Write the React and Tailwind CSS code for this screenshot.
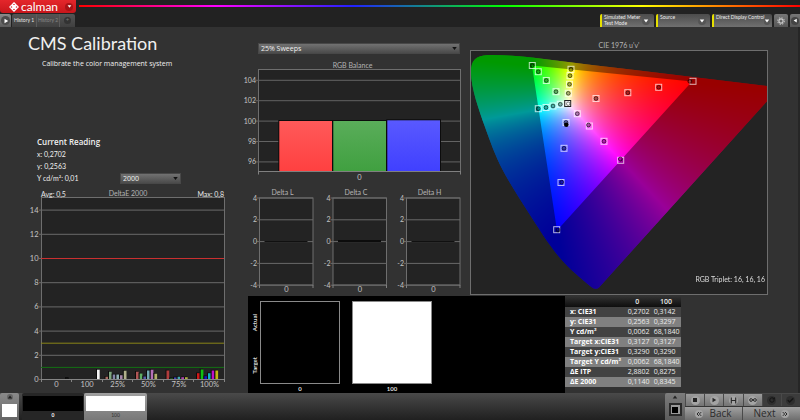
import React, { useLayoutEffect, useRef, useState } from "react";
import {
    Check,
    ChevronsLeft,
    ChevronsRight,
    Infinity as InfinityIcon,
    RotateCw,
} from "lucide-react";

const FONT = "font-['Lato','Open_Sans',sans-serif]";

const deltaEBars = [
    { x: 66, h: 1.5, color: "#111111" },
    { x: 97, h: 9.5, color: "#f4f4f4" },
    { x: 105.5, h: 2.5, color: "#a86a60" },
    { x: 109, h: 7.5, color: "#7fa67f" },
    { x: 112.7, h: 4.7, color: "#8484a8" },
    { x: 116.4, h: 4.7, color: "#8fb0b4" },
    { x: 120, h: 4, color: "#a585aa" },
    { x: 123.8, h: 8.5, color: "#b0b08a" },
    { x: 136, h: 7.5, color: "#b05656" },
    { x: 139.7, h: 5.7, color: "#5fae62" },
    { x: 143.4, h: 2.7, color: "#5858a8" },
    { x: 147, h: 8.7, color: "#74aab2" },
    { x: 150.7, h: 9.5, color: "#b470b8" },
    { x: 154.4, h: 5.5, color: "#b0b068" },
    { x: 166.5, h: 8.7, color: "#b03c3c" },
    { x: 170.2, h: 1, color: "#206020" },
    { x: 174, h: 1.8, color: "#4444b8" },
    { x: 177.6, h: 2.5, color: "#40aab0" },
    { x: 181.3, h: 2, color: "#b040b0" },
    { x: 185, h: 2, color: "#b0b040" },
    { x: 197, h: 6, color: "#d01818" },
    { x: 200.7, h: 9.7, color: "#10c010" },
    { x: 204.4, h: 3, color: "#1414c8" },
    { x: 208, h: 6, color: "#10b4c0" },
    { x: 211.7, h: 8.7, color: "#c010c8" },
    { x: 215.4, h: 8.7, color: "#c0b810" },
];

// target squares and measured circles, in chart units
const ciePoints = [
    { x: 532.3, y: 65.5 },
    { x: 538.3, y: 71.7 },
    { x: 546.3, y: 80.5 },
    { x: 556, y: 91.7 },
    { x: 571, y: 69.3 },
    { x: 570, y: 75.7 },
    { x: 569.5, y: 84.3 },
    { x: 568.3, y: 93.3 },
    { x: 538.3, y: 108.7 },
    { x: 546, y: 107.5 },
    { x: 553, y: 106 },
    { x: 560.3, y: 104.3 },
    { x: 577.3, y: 113.7 },
    { x: 589.3, y: 126, cx: 588.5, cy: 125 },
    { x: 604, y: 141.3 },
    { x: 620.7, y: 160.3, cx: 620.3, cy: 159 },
    { x: 566, y: 122.5 },
    { x: 564, y: 148.3 },
    { x: 561, y: 182.5, cx: 561.7, cy: 182.2 },
    { x: 556.7, y: 229.7, cx: 558, cy: 230 },
    { x: 596, y: 98.5 },
    { x: 627.8, y: 92.7 },
    { x: 658.7, y: 87.3 },
    { x: 693, y: 81.3, cx: 689.8, cy: 81.3 },
];

const tableRows = [
    ["x: CIE31", "0,2702", "0,3142"],
    ["y: CIE31", "0,2563", "0,3297"],
    ["Y cd/m²", "0,0062", "68,1840"],
    ["Target x:CIE31", "0,3127", "0,3127"],
    ["Target y:CIE31", "0,3290", "0,3290"],
    ["Target Y cd/m²", "0,0062", "68,1840"],
    ["ΔE ITP", "2,8802", "0,8275"],
    ["ΔE 2000", "0,1140", "0,8345"],
];

const GAMUT =
    "M471 72C471 60 476 55.5 488 55C503 54.6 517 56 532 57.5L592 65L635 70L767 86V101.3L705 170L635 247.5L599 287.5Q596 290 592 287.5C584 281 573 272 565 263.5C552 250 541 232 532 218C520 199 509 182 502.7 170C495 155 490 141 485 127C479 110 471 88 471 72Z";

function Plot({ x, y, w, h }) {
    return (
        <rect x={x} y={y} width={w} height={h} fill="#232323" stroke="#6e6e6e" strokeWidth="1" />
    );
}

function DeltaEChart() {
    const yOf = (v) => 379.5 - v * 12.1;
    return (
        <svg viewBox="0 188 240 205" className="block w-full" role="img" aria-label="DeltaE 2000">
            <Plot x={41.5} y={197.5} w={183} h={182} />
            <g fill="#e8e8e8" fontSize="7">
                <text x="41" y="196.500">Avg: 0,5</text>
                <text x="224" y="196.500" textAnchor="end">Max: 0,8</text>
            </g>
            <text x="128" y="195.5" fontSize="7" fill="#b4b4b4" textAnchor="middle">DeltaE 2000</text>
            {[0, 2, 4, 6, 8, 10, 12, 14].map((v) => (
                <g key={v}>
                    <path d={`M39 ${yOf(v)}H224`} stroke="#6a6a6a" />
                    <text x="38.5" y={yOf(v) + 2.5} fontSize="7.5" fill="#c4c4c4" textAnchor="end">{v}</text>
                </g>
            ))}
            <path d={`M41 ${yOf(10)}H224`} stroke="#c93030" />
            <path d={`M41 ${yOf(3)}H224`} stroke="#8a8618" />
            <path d={`M41 ${yOf(1)}H224`} stroke="#147014" />
            {deltaEBars.map((b) => (
                <g key={b.x}>
                    <rect x={b.x - 1} y={378.5 - b.h} width="3.4" height={b.h + 0.5} fill="#0c0c0c" />
                    <rect x={b.x} y={379.2 - b.h} width="2.7" height={b.h} fill={b.color} />
                </g>
            ))}
            <path d="M41.5 379.5H224.5M41.5 379v3M71.5 379v3M102.5 379v3M132.5 379v3M163.5 379v3M193.5 379v3M224.5 379v3" stroke="#858585" />
            {["0", "100", "25%", "50%", "75%", "100%"].map((label, i) => (
                <text key={i} x={56.5 + i * 30.6} y="387" fontSize="7.5" fill="#c4c4c4" textAnchor="middle">{label}</text>
            ))}
        </svg>
    );
}

function RgbBalance() {
    const bars = [
        { x: 279.3, y: 121, from: "#ff5959", to: "#ff4040", id: "barRed" },
        { x: 333.3, y: 121, from: "#5aad5a", to: "#40a040", id: "barGreen" },
        { x: 387.3, y: 120.3, from: "#5959ff", to: "#4040ff", id: "barBlue" },
    ];
    return (
        <svg viewBox="240 55 225 132" className="block w-full" role="img" aria-label="RGB Balance">
            <defs>
                {bars.map((b) => (
                    <linearGradient key={b.id} id={b.id} x1="0" y1="0" x2="0" y2="1">
                        <stop offset="0" stopColor={b.from} />
                        <stop offset="1" stopColor={b.to} />
                    </linearGradient>
                ))}
            </defs>
            <text x="352.5" y="67.5" fontSize="7" fill="#b4b4b4" textAnchor="middle">RGB Balance</text>
            <Plot x={258.5} y={69.5} w={202} h={102} />
            {[104, 102, 100, 98, 96].map((v, i) => (
                <g key={v}>
                    <path d={`M255.5 ${80.3 + i * 20.4}H460`} stroke="#636363" />
                    <text x="256" y={82.8 + i * 20.4} fontSize="7" fill="#c4c4c4" textAnchor="end">{v}</text>
                </g>
            ))}
            {bars.map((b) => (
                <g key={b.id}>
                    <rect x={b.x - 1} y={b.y - 1} width="54.7" height={172 - b.y} fill="#0c0c0c" />
                    <rect x={b.x} y={b.y} width="52.7" height={171 - b.y} fill={`url(#${b.id})`} />
                </g>
            ))}
            <path d="M258.5 171.5H460.5M258.5 171v3.5M460.5 171v3.5" stroke="#808080" />
            <text x="359.5" y="179.5" fontSize="7.5" fill="#c4c4c4" textAnchor="middle">0</text>
        </svg>
    );
}

function DeltaCharts() {
    const charts = [
        { title: "Delta L", x: 259.5, line: "#101010", w: 1 },
        { title: "Delta C", x: 333, line: "#0c0c0c", w: 2 },
        { title: "Delta H", x: 406.5, line: "#101010", w: 1 },
    ];
    return (
        <svg viewBox="240 187 225 109" className="block w-full" role="img" aria-label="Delta L, Delta C, Delta H">
            {charts.map((c) => (
                <g key={c.title}>
                    <text x={c.x + 23} y="195" fontSize="7" fill="#b4b4b4" textAnchor="middle">{c.title}</text>
                    <Plot x={c.x} y={198} w={53.5} h={87} />
                    {[4, 2, 0, -2, -4].map((v, i) => (
                        <g key={v}>
                            <path d={`M${c.x - 2.5} ${198 + i * 21.8}H${c.x + 53.5}`} stroke="#6a6a6a" />
                            <text x={c.x - 2.5} y={200.5 + i * 21.8} fontSize="7" fill="#c4c4c4" textAnchor="end">{v}</text>
                        </g>
                    ))}
                    <path d={`M${c.x + 5} ${242 - c.w / 2}h43`} stroke={c.line} strokeWidth={c.w} />
                    <path d={`M${c.x} 285v3M${c.x + 53.5} 285v3`} stroke="#808080" />
                    <text x={c.x + 27} y="292" fontSize="7.5" fill="#c4c4c4" textAnchor="middle">0</text>
                </g>
            ))}
        </svg>
    );
}

// Colour of a chart position: pixel -> u'v' -> XYZ -> linear RGB at full brightness
function chromaticity(px, py) {
    const u = 0.1754 + (px - 557) / 491;
    const v = 0.1579 + (230.5 - py) / 408;
    const X = (9 * u) / (4 * v);
    const Z = (12 - 3 * u - 20 * v) / (4 * v);
    const rgb = [
        3.2406 * X - 1.5372 - 0.4986 * Z,
        -0.9689 * X + 1.8758 + 0.0415 * Z,
        0.0557 * X - 0.204 + 1.057 * Z,
    ].map((c) => Math.max(c, 0));
    const max = Math.max(...rgb) || 1;
    return rgb.map((c) => (255 * c) / max);
}

function CieChart() {
    const canvasRef = useRef(null);

    useLayoutEffect(() => {
        const ctx = canvasRef.current.getContext("2d");
        const image = ctx.createImageData(298, 243);
        for (let y = 0; y < 243; y++) {
            for (let x = 0; x < 298; x++) {
                const [r, g, b] = chromaticity(470 + x, 51 + y);
                image.data.set([r, g, b, 255], (y * 298 + x) * 4);
            }
        }
        ctx.putImageData(image, 0, 0);
    }, []);

    return (
        <svg viewBox="465 27 335 269" className="block w-full" role="img" aria-label="CIE 1976 u'v'">
            <defs>
                <clipPath id="gamut">
                    <path d={GAMUT} />
                </clipPath>
            </defs>
            <text x="619" y="48" fontSize="7" fill="#b4b4b4" textAnchor="middle">CIE 1976 u'v'</text>
            <Plot x={470.5} y={50.5} w={297} h={244} />
            <g clipPath="url(#gamut)">
                <foreignObject x="470" y="51" width="298" height="243">
                    <canvas ref={canvasRef} width="298" height="243" className="block" />
                </foreignObject>
                <path d="M465 40H800V300H465ZM532 65.5L692 81.5L557 230.5Z" fillRule="evenodd" fill="#000" fillOpacity="0.4" />
            </g>
            {ciePoints.map((p, i) => (
                <g key={i} fill="none">
                    <rect x={p.x - 3} y={p.y - 3} width="6" height="6" stroke="#fff" strokeOpacity="0.7" />
                    <circle cx={p.cx ?? p.x} cy={p.cy ?? p.y} r="1.9" fill="#000" fillOpacity="0.3" stroke="#000" strokeOpacity="0.65" strokeWidth="0.9" />
                </g>
            ))}
            <rect x="564.7" y="100.5" width="6" height="6" fill="#eee" stroke="#222" />
            <circle cx="568.2" cy="103.7" r="1.7" fill="#fff" stroke="#555" strokeWidth="0.7" />
            <circle cx="566.3" cy="124.8" r="2.3" fill="#000" />
            <text x="765" y="282" fontSize="7" fill="#dcdcdc" textAnchor="end">RGB Triplet: 16, 16, 16</text>
        </svg>
    );
}

function Dropdown({ label, value, options, onChange, className }) {
    return (
        <label className={`relative block ${className}`}>
            <span className="sr-only">{label}</span>
            <select
                value={value}
                onChange={(e) => onChange(e.target.value)}
                className="block h-[11px] w-full appearance-none border border-[#484848] bg-linear-to-b from-[#727272] to-[#4b4b4b] px-[2px] text-[7px] leading-[9px] text-[#f0f0f0] font-['Open_Sans',sans-serif]"
            >
                {options.map((o) => (
                    <option key={o}>{o}</option>
                ))}
            </select>
            <svg viewBox="0 0 6 4" className="pointer-events-none absolute top-1 right-[3px] h-[3px] w-[5px]" aria-hidden="true">
                <path d="M0 0h6L3 4z" fill="#111" />
            </svg>
        </label>
    );
}

function Triangle({ dir = "down", className }) {
    const d = { down: "M1 2h6L4 6z", right: "M2 1v6l5-3z", left: "M6 1v6L1 4z", up: "M1 6h6L4 2z" };
    return (
        <svg viewBox="0 0 8 8" className={className} aria-hidden="true">
            <path d={d[dir]} fill="currentColor" />
        </svg>
    );
}

function SourceButton({ lines, className }) {
    return (
        <button className={`flex h-[13px] items-center rounded-t-[2px] border-l-2 border-[#e6e000] bg-linear-to-b from-[#4c4c4c] to-[#707070] pr-1 ${className}`}>
            <span className="flex-1 self-start pl-[2px] text-left text-[5px] leading-[6px] whitespace-nowrap text-[#ededed]">
                {lines.map((l) => (
                    <span key={l} className="block">{l}</span>
                ))}
            </span>
            <span className="flex size-2 items-center justify-center rounded-full bg-[#555] text-white">
                <Triangle className="size-[6px]" />
            </span>
        </button>
    );
}

function Header() {
    return (
        <header className="bg-[#222]">
            <div className="flex h-[13px] items-start">
                <button className="flex h-[13px] w-[76px] items-center rounded-b-[3px] bg-linear-to-b from-[#e4262b] to-[#c8161b] pl-[9px] text-white">
                    <svg viewBox="0 0 20 20" className="size-[10px]" aria-hidden="true">
                        <path
                            d="M10 1.500L13.500 5L10 8.500L6.500 5zM10 11.500L13.500 15L10 18.500L6.500 15zM5 6.500L8.500 10L5 13.500L1.500 10zM15 6.500L18.500 10L15 13.500L11.500 10z"
                            fill="none"
                            stroke="#fff"
                            strokeWidth="2.200"
                        />
                    </svg>
                    <span className="ml-[2px] text-[12px] leading-[10px]">calman</span>
                    <span className="mr-[3px] ml-auto flex size-2 items-center justify-center rounded-full bg-[#a81216]">
                        <Triangle className="size-[5px]" />
                    </span>
                </button>
                <div className="mt-[5px] ml-[3px] h-[2px] flex-1 bg-[linear-gradient(90deg,#f00_0%,#f0f_19%,#22f_38%,#0f0_59%,#ff0_78%,#f00_100%)]" />
            </div>
            <div className="flex h-[14px] items-end">
                <button aria-label="Play" className="mr-px flex h-[13px] w-[11px] items-center justify-center rounded-tr-[2px] bg-linear-to-b from-[#8a8a8a] to-[#5c5c5c] text-white">
                    <span className="flex size-[9px] items-center justify-center rounded-full bg-[#4c4c4c]">
                        <Triangle dir="right" className="size-[6px]" />
                    </span>
                </button>
                <nav className="flex h-[13px] items-center rounded-t-[2px] bg-linear-to-b from-[#545454] to-[#404040] text-[5px] whitespace-nowrap">
                    <button className="h-full w-6 text-[#e4e4e4]">History 1</button>
                    <button className="h-full w-6 border-x border-[#5c5c5c] text-[#858585]">History 2</button>
                    <button aria-label="Add" className="flex h-full w-[15px] items-center justify-center text-[#777]">
                        <span className="size-[7px] rounded-full bg-[#333] text-center text-[6px] leading-[6px]">+</span>
                    </button>
                </nav>
                <div className="ml-auto flex items-end gap-[2px]">
                    <SourceButton lines={["Simulated Meter", "Test Mode"]} className="w-[54px]" />
                    <SourceButton lines={["Source"]} className="w-[54px]" />
                    <SourceButton lines={["Direct Display Control"]} className="w-[60px]" />
                    <button aria-label="Settings" className="flex h-[13px] w-[14px] items-center justify-center rounded-t-[2px] bg-linear-to-b from-[#777] to-[#565656]">
                        <svg viewBox="0 0 10 10" className="size-2" aria-hidden="true">
                            <circle cx="5" cy="5" r="2.6" fill="none" stroke="#ccc" strokeWidth="1.4" />
                            <circle cx="5" cy="5" r="4.2" fill="none" stroke="#bbb" strokeWidth="1.3" strokeDasharray="1.7 1.6" />
                        </svg>
                    </button>
                    <button aria-label="Collapse" className="flex h-[13px] w-[10px] items-center justify-center rounded-tl-[2px] bg-linear-to-b from-[#777] to-[#565656] text-white">
                        <span className="flex size-2 items-center justify-center rounded-full bg-[#444]">
                            <Triangle dir="left" className="size-[5px]" />
                        </span>
                    </button>
                </div>
            </div>
        </header>
    );
}

function Swatch({ label, color }) {
    return (
        <div className="w-[80px]">
            <div className={`h-[83px] border border-[#8a8a8a] ${color}`} />
            <p className="mt-px text-center text-[6px] leading-[8px] font-bold text-[#ddd]">{label}</p>
        </div>
    );
}

function ReadingTable() {
    return (
        <table className="w-[116px] border-collapse font-['Open_Sans',sans-serif] text-[7px] leading-[10px] text-[#ececec]">
            <thead>
                <tr className="h-[11px] bg-linear-to-b from-[#333] to-[#0e0e0e]">
                    <th aria-label="Reading" />
                    <th className="p-0 font-semibold">0</th>
                    <th className="p-0 font-semibold">100</th>
                </tr>
            </thead>
            <tbody>
                {tableRows.map((row, i) => (
                    <tr key={row[0]} className={i % 2 ? "bg-[#808080]" : "bg-[#424242]"}>
                        <th scope="row" className="p-0 pl-[5px] text-left font-bold whitespace-nowrap text-white">{row[0]}</th>
                        <td className="p-0 pl-1">{row[1]}</td>
                        <td className="p-0 pl-[3px]">{row[2]}</td>
                    </tr>
                ))}
            </tbody>
        </table>
    );
}

function IconButton({ label, dark, children }) {
    return (
        <button
            aria-label={label}
            className={`flex h-3 flex-1 items-center justify-center border-l border-[#4a4a4a] ${
                dark ? "bg-[#3c3c3c] text-[#151515]" : "bg-linear-to-b from-[#9c9c9c] to-[#747474] text-[#2a2a2a]"
            }`}
        >
            <span className={`flex size-[9px] items-center justify-center rounded-full ${dark ? "bg-[#2e2e2e]" : "bg-[#a4a4a4]"}`}>
                {children}
            </span>
        </button>
    );
}

function Footer() {
    return (
        <footer className="flex h-[27px] items-stretch justify-between bg-linear-to-b from-[#4a4a4a] to-[#202020]">
            <div className="flex items-stretch">
                <button aria-label="Pattern window" className="flex w-[19px] flex-col items-center rounded-t-[2px] bg-linear-to-b from-[#8a8a8a] to-[#666] pt-px">
                    <Triangle dir="up" className="size-[6px] rounded-full bg-[#666] text-[#222]" />
                    <span className="mt-1 h-[13px] w-[15px] bg-white" />
                </button>
                <button className="ml-[3px] w-[62px] rounded-t-[2px] bg-[#262626] px-px pt-[3px] text-[5px] text-white">
                    <span className="block h-[15px] bg-black" />
                    <span className="block leading-[9px] font-bold">0</span>
                </button>
                <button className="w-[63px] rounded-t-[2px] bg-linear-to-b from-[#a0a0a0] to-[#787878] px-[2px] pt-[3px] text-[5px] text-[#333]">
                    <span className="block h-[15px] bg-white" />
                    <span className="block leading-[9px]">100</span>
                </button>
            </div>
            <div className="flex">
                <button aria-label="Current pattern" className="flex w-[20px] flex-col items-center rounded-tl-[2px] bg-linear-to-b from-[#7c7c7c] to-[#5c5c5c] pt-px">
                    <Triangle dir="up" className="size-[6px] text-[#222]" />
                    <span className="mt-[3px] flex size-[13px] items-center justify-center border-2 border-[#2a2a2a] bg-[#999]">
                        <span className="size-[6px] bg-black" />
                    </span>
                </button>
                <div className="w-[115px] pt-px">
                    <div className="flex">
                        <IconButton label="Stop"><span className="size-1 bg-[#222]" /></IconButton>
                        <IconButton label="Read"><Triangle dir="right" className="size-[6px]" /></IconButton>
                        <IconButton label="Read series">
                            <svg viewBox="0 0 8 8" className="size-[7px]" aria-hidden="true">
                                <path d="M1.500 0.500v7M6.500 0.500v7M1.500 4h5" fill="none" stroke="currentColor" strokeWidth="1.300" />
                            </svg>
                        </IconButton>
                        <IconButton label="Read continuous"><InfinityIcon className="size-2" strokeWidth={3} /></IconButton>
                        <IconButton label="Refresh" dark><RotateCw className="size-[6px]" strokeWidth={4} /></IconButton>
                        <IconButton label="Accept" dark><Check className="size-[7px]" strokeWidth={5} /></IconButton>
                    </div>
                    <div className="mt-px flex font-['Open_Sans',sans-serif] text-[10px] leading-[13px] text-[#2c2c2c]">
                        <button className="flex h-[13px] flex-1 items-center justify-center gap-[6px] bg-linear-to-b from-[#a2a2a2] to-[#6e6e6e]">
                            <ChevronsLeft className="size-2 rounded-full bg-[#a4a4a4]" strokeWidth={3} />
                            Back
                        </button>
                        <button className="flex h-[13px] flex-1 items-center justify-center gap-[6px] border-l border-[#4a4a4a] bg-linear-to-b from-[#a2a2a2] to-[#6e6e6e]">
                            Next
                            <ChevronsRight className="size-2 rounded-full bg-[#a4a4a4]" strokeWidth={3} />
                        </button>
                    </div>
                </div>
            </div>
        </footer>
    );
}

export default function App() {
    const [sweep, setSweep] = useState("25% Sweeps");
    const [formula, setFormula] = useState("2000");

    return (
        <div className={`flex min-h-screen flex-col bg-[#222] ${FONT}`}>
            <Header />
            <main className="grid flex-1 grid-cols-[3fr_7fr] bg-[#323232] text-[#f0f0f0] shadow-[inset_-2px_0_0_#262626]">
                <section className="flex flex-col justify-between">
                    <div className="pt-[5px]">
                        <h1 className="pl-7 text-[18px] leading-[22px]">CMS Calibration</h1>
                        <p className="mt-[5px] pl-[42px] text-[7px] leading-[10px] font-['Open_Sans',sans-serif]">Calibrate the color management system</p>
                    </div>
                    <div>
                        <h2 className="pl-[37px] text-[8px] leading-[13px] font-semibold font-['Open_Sans',sans-serif]">Current Reading</h2>
                        <div className="flex items-end pb-1 pl-[37px] text-[7px] leading-3">
                            <div className="w-[83px]">
                                <p>x: 0,2702</p>
                                <p>y: 0,2563</p>
                                <p>Y cd/m²: 0,01</p>
                            </div>
                            <Dropdown
                                label="DeltaE formula"
                                value={formula}
                                options={["2000", "ITP"]}
                                onChange={setFormula}
                                className="w-[61px]"
                            />
                        </div>
                        <DeltaEChart />
                    </div>
                </section>
                <section className="flex flex-col">
                    <div className="grid grid-cols-[225fr_335fr]">
                        <div className="pt-4">
                            <Dropdown
                                label="Sweep"
                                value={sweep}
                                options={["25% Sweeps", "50% Sweeps", "75% Sweeps"]}
                                onChange={setSweep}
                                className="mr-[5px] mb-px ml-[18px]"
                            />
                            <RgbBalance />
                            <DeltaCharts />
                        </div>
                        <CieChart />
                    </div>
                    <div className="grid flex-1 grid-cols-[317fr_235fr] pl-2">
                        <div className="flex bg-black pt-[5px] pl-[2px]">
                            <div className="flex w-[10px] flex-col items-center justify-around pb-[6px] text-[6px] leading-[8px] font-bold text-[#ddd]">
                                <span className="rotate-180 [writing-mode:vertical-rl]">Actual</span>
                                <span className="rotate-180 [writing-mode:vertical-rl]">Target</span>
                            </div>
                            <div className="flex gap-3">
                                <Swatch label="0" color="bg-black" />
                                <Swatch label="100" color="bg-white" />
                            </div>
                        </div>
                        <div>
                            <ReadingTable />
                        </div>
                    </div>
                </section>
            </main>
            <Footer />
        </div>
    );
}
